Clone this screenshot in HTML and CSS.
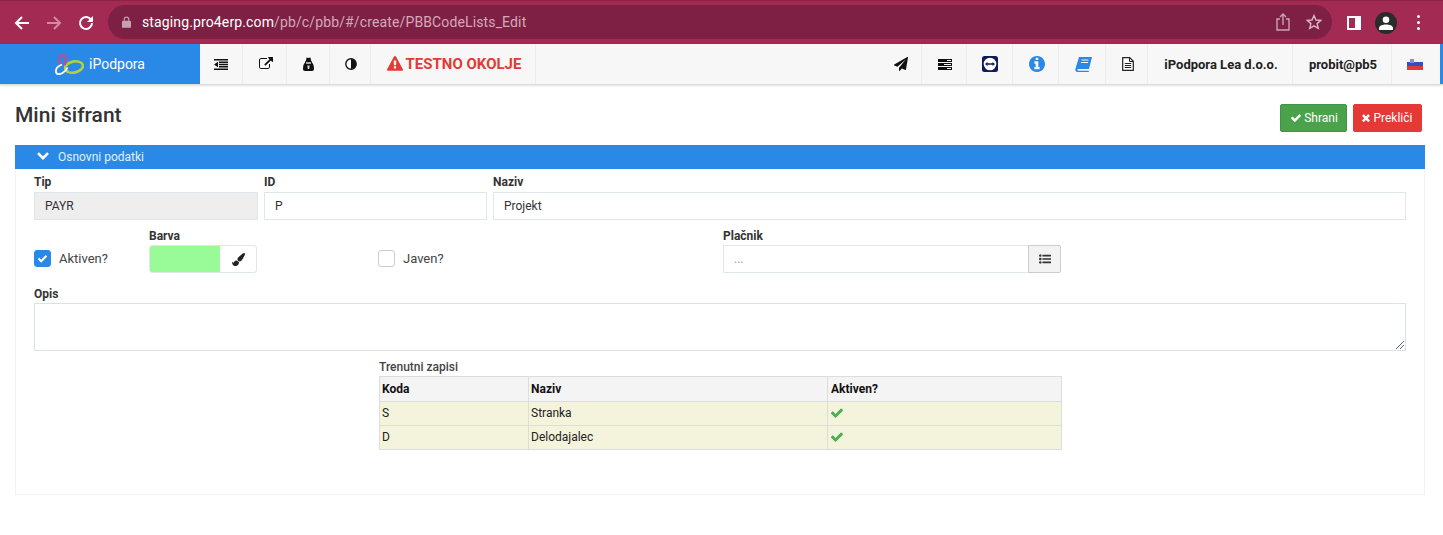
FILE: index.html
```html
<!DOCTYPE html>
<html>
  <head>
    <meta charset="utf-8">
    <title>Mini šifrant</title>
    <link rel="stylesheet" href="styles.css">
  </head>
  <body>
    <div class="browser-bar">
      <svg class="browser-icon" width="16" height="16" viewBox="0 0 16 16"><path d="M15 8H2M8 2 2 8l6 6" fill="none" stroke="#fff" stroke-width="2"/></svg>
      <svg class="browser-icon" width="16" height="16" viewBox="0 0 16 16"><path d="M1 8h13M8 2l6 6-6 6" fill="none" stroke="#d08aa4" stroke-width="2"/></svg>
      <svg class="browser-icon" width="16" height="16" viewBox="0 0 16 16"><path d="M13.200 5A6 6 0 1 0 14 8" fill="none" stroke="#fff" stroke-width="2"/><path d="M15 1v6H9z" fill="#fff"/></svg>
      <div class="address">
        <svg width="9" height="12" viewBox="0 0 10 13"><path d="M2.500 5V3.500a2.500 2.500 0 0 1 5 0V5" fill="none" stroke="#c3a3b1" stroke-width="1.300"/><rect y="5" width="10" height="8" rx="1" fill="#c3a3b1"/></svg>
        <span class="url"><b>staging.pro4erp.com</b>/pb/c/pbb/#/create/PBBCodeLists_Edit</span>
        <svg class="address-end" width="14" height="18" viewBox="0 0 14 18"><path d="M4 6H1v11h12V6h-3M7 12V1M4 4l3-3 3 3" fill="none" stroke="#c9a3b3" stroke-width="1.400"/></svg>
        <svg width="16" height="16" viewBox="0 0 16 16"><path d="m8 1.500 2 4.500 4.800.4-3.700 3.200 1.200 4.800L8 11.900l-4.300 2.500 1.200-4.800L1.200 6.400 6 6z" fill="none" stroke="#d6b6c3" stroke-width="1.400"/></svg>
      </div>
      <div class="browser-side"></div>
      <div class="avatar"><svg width="14" height="14" viewBox="0 0 14 14"><circle cx="7" cy="3.800" r="3.300" fill="#fff"/><path d="M0 14v-2c0-2.500 4-3.500 7-3.500s7 1 7 3.500v2z" fill="#fff"/></svg></div>
      <div class="browser-menu"><i></i><i></i><i></i></div>
    </div>

    <div class="navbar">
      <div class="logo">
        <svg width="29" height="21" viewBox="0 0 29 21"><ellipse cx="19" cy="13" rx="9" ry="5.500" fill="none" stroke="#b4cf3c" stroke-width="2.600" transform="rotate(-12 19 13)"/><path d="M6 11C3 6 4 1 7.500 1S12 6 10 11" fill="none" stroke="#e0407f" stroke-width="1.800"/><path d="M7 10.500C3 12 .5 15 1 18s4 2.500 6.500 1 4.500-4 5-5.500" fill="none" stroke="#fff" stroke-width="1.800"/></svg>
        <span>iPodpora</span>
      </div>
      <div class="nav-cell nav-first w43"><svg width="14" height="11" viewBox="0 0 14 11"><path d="M0 0h14v1.500H0zM0 9.500h14V11H0zM5 2.500h9v1.500H5zM5 4.800h9v1.400H5zM5 7h9v1.500H5zM4 2.800v5.400L0 5.500z" fill="#111"/></svg></div>
      <div class="nav-cell w44"><svg width="14" height="14" viewBox="0 0 1792 1792"><path d="M1408 928v320q0 119-84.500 203.500t-203.500 84.500h-832q-119 0-203.500-84.500t-84.500-203.500v-832q0-119 84.500-203.500t203.500-84.500h704q14 0 23 9t9 23v64q0 14-9 23t-23 9h-704q-66 0-113 47t-47 113v832q0 66 47 113t113 47h832q66 0 113-47t47-113v-320q0-14 9-23t23-9h64q14 0 23 9t9 23zm384-864v512q0 26-19 45t-45 19-45-19l-176-176-652 652q-10 10-23 10t-23-10l-114-114q-10-10-10-23t10-23l652-652-176-176q-19-19-19-45t19-45 45-19h512q26 0 45 19t19 45z" fill="#111"/></svg></div>
      <div class="nav-cell nav-first w43"><svg width="11" height="14" viewBox="0 0 11 14"><path d="M3 3.500 3.500.6l2 .5 2-.5L8 3.500c.7.5 1 1.200 1 2 1.300 1.300 2 3.500 2 6.500 0 1.200-.8 2-2 2H2c-1.200 0-2-.8-2-2 0-3 .7-5.200 2-6.500 0-.8.3-1.500 1-2z" fill="#111"/><path d="M3 5.200h5v1.600H3zM4.300 8.500h2.400l-.5 3.500H4.800z" fill="#d8d8d8"/></svg></div>
      <div class="nav-cell w41"><svg width="12" height="12" viewBox="0 0 12 12"><circle cx="6" cy="6" r="5.200" fill="#fff" stroke="#111" stroke-width="1.400"/><path d="M6 1a5 5 0 0 1 0 10z" fill="#111"/></svg></div>
      <div class="nav-cell warning">
        <svg width="16" height="16" viewBox="0 0 1792 1792"><path d="M1024 1375v-190q0-14-9.500-23.500t-22.500-9.500h-192q-13 0-22.500 9.500t-9.500 23.500v190q0 14 9.500 23.500t22.500 9.500h192q13 0 22.500-9.500t9.500-23.500zm-2-374l18-459q0-12-10-19-13-11-24-11h-220q-11 0-24 11-10 7-10 21l17 457q0 10 10 16.500t24 6.500h185q14 0 23.500-6.500t10.500-16.500zm-14-934l768 1408q35 63-2 126-17 29-46.500 46t-63.500 17h-1536q-34 0-63.500-17t-46.500-46q-37-63-2-126l768-1408q17-31 47-49t65-18 65 18 47 49z" fill="#e53935"/></svg>
        <span>TESTNO OKOLJE</span>
      </div>
      <div class="nav-right">
        <div class="nav-cell w43"><svg width="14" height="14" viewBox="0 0 1792 1792"><path d="M1764 11q33 24 27 64l-256 1536q-5 29-32 45-14 8-31 8-11 0-24-5l-453-185-242 295q-18 23-49 23-13 0-22-4-19-7-30.500-23.500t-11.500-36.500v-349l864-1059-1069 925-395-162q-37-14-40-55-2-40 32-59l1664-960q15-9 32-9 20 0 36 11z" fill="#111"/></svg></div>
        <div class="nav-cell w45"><svg width="14" height="11" viewBox="0 0 14 11"><path d="M0 0h14v3H0zM0 4h14v3H0zM0 8h14v3H0z" fill="#111"/><path d="M9 1h4v1H9zM6 5h7v1H6zM9 9h4v1H9z" fill="#f7f7f7"/></svg></div>
        <div class="nav-cell nav-first w46"><svg width="16" height="16" viewBox="0 0 16 16"><rect width="16" height="16" rx="2.500" fill="#0e1a5c"/><circle cx="8" cy="8" r="6.300" fill="#fff"/><path d="M3 8l2.500-2v1.200h5V6L13 8l-2.500 2V8.800h-5V10z" fill="#0e1a5c"/></svg></div>
        <div class="nav-cell w46"><svg width="16" height="16" viewBox="128 128 1536 1536"><path d="M1152 1376v-160q0-14-9-23t-23-9h-96v-512q0-14-9-23t-23-9h-320q-14 0-23 9t-9 23v160q0 14 9 23t23 9h96v320h-96q-14 0-23 9t-9 23v160q0 14 9 23t23 9h448q14 0 23-9t9-23zm-128-896v-160q0-14-9-23t-23-9h-192q-14 0-23 9t-9 23v160q0 14 9 23t23 9h192q14 0 23-9t9-23zm640 416q0 209-103 385.500t-279.500 279.500-385.500 103-385.500-103-279.500-279.500-103-385.500 103-385.500 279.500-279.500 385.500-103 385.500 103 279.500 279.500 103 385.500z" fill="#2a88e6"/></svg></div>
        <div class="nav-cell w47"><svg width="17" height="15" viewBox="0 0 17 15"><path d="M4 0h13l-3 12H3.500C2 12 2 13.800 3.500 13.800H14l-.3 1.200H2.500C.5 15 0 13 .5 11.500z" fill="#2a88e6"/><path d="M6.500 3h7M6 5.500h7" stroke="#f7f7f7"/></svg></div>
        <div class="nav-cell w42"><svg width="12" height="14" viewBox="0 0 12 14"><path d="M.7.700h7l3.600 3.600v9H.7z" fill="#fff" stroke="#222" stroke-width="1.200"/><path d="M7.500.700v3.800h3.800M2.800 6.500h6.400M2.800 8.500h6.400M2.800 10.500h6.400" fill="none" stroke="#222"/></svg></div>
        <div class="nav-cell nav-text w145">iPodpora Lea d.o.o.</div>
        <div class="nav-cell nav-text w99">probit@pb5</div>
        <div class="nav-cell flag-cell"><div class="flag"><i></i><i></i><i></i><b class="crest"></b></div></div>
      </div>
    </div>

    <div class="page-head">
      <h1>Mini šifrant</h1>
      <div class="actions">
        <button class="btn btn-save"><svg width="10" height="10" viewBox="128 128 1552 1552"><path d="M1671 566q0 40-28 68l-724 724-136 136q-28 28-68 28t-68-28l-136-136-362-362q-28-28-28-68t28-68l136-136q28-28 68-28t68 28l294 295 656-657q28-28 68-28t68 28l136 136q28 28 28 68z" fill="#fff"/></svg>Shrani</button>
        <button class="btn btn-cancel"><svg width="8" height="8" viewBox="300 300 1200 1260"><path d="M1490 1322q0 40-28 68l-136 136q-28 28-68 28t-68-28l-294-294-294 294q-28 28-68 28t-68-28l-136-136q-28-28-28-68t28-68l294-294-294-294q-28-28-28-68t28-68l136-136q28-28 68-28t68 28l294 294 294-294q28-28 68-28t68 28l136 136q28 28 28 68t-28 68l-294 294 294 294q28 28 28 68z" fill="#fff"/></svg>Prekliči</button>
      </div>
    </div>

    <div class="panel">
      <div class="panel-head">
        <svg class="chevron" width="12" height="12" viewBox="64 400 1664 1000"><path d="M1683 808l-742 741q-19 19-45 19t-45-19l-742-741q-19-19-19-45.500t19-45.500l166-165q19-19 45-19t45 19l531 531 531-531q19-19 45-19t45 19l166 165q19 19 19 45.500t-19 45.500z" fill="#fff"/></svg>
        <span>Osnovni podatki</span>
      </div>
      <div class="panel-body">
        <div class="row-top">
          <div class="field col-tip"><label>Tip</label><div class="input disabled">PAYR</div></div>
          <div class="field col-id"><label>ID</label><div class="input">P</div></div>
          <div class="field col-name"><label>Naziv</label><div class="input">Projekt</div></div>
        </div>

        <div class="row-options">
          <div class="check-line">
            <span class="check checked"><svg width="11" height="9" viewBox="0 0 11 9"><path d="M1.500 4.500l2.700 2.700 5.300-5.500" fill="none" stroke="#fff" stroke-width="2"/></svg></span>
            <span>Aktiven?</span>
          </div>
          <div class="field">
            <label>Barva</label>
            <div class="color-pick">
              <span class="swatch"></span>
              <span class="brush"><svg width="13" height="13" viewBox="0 0 1792 1792"><path d="M1615 0q70 0 122.500 46.500t52.500 116.500q0 63-45 151-332 629-465 752-97 91-218 91-126 0-216.500-92.500t-90.500-219.500q0-128 92-212l638-579q59-54 130-54zm-909 1034q39 76 106.500 130t150.500 76l1 71q4 213-129.500 347t-348.500 134q-123 0-218-46.500t-152.500-127.500-86.500-183-29-220q7 5 41 30t62 44.500 59 36.500 46 17q41 0 55-37 25-66 57.500-112.500t69.500-76 88-47.500 103-25.500 125-10.500z" fill="#222"/></svg></span>
            </div>
          </div>
          <div class="check-line">
            <span class="check"></span>
            <span>Javen?</span>
          </div>
          <div class="field">
            <label>Plačnik</label>
            <div class="lookup">
              <div class="lookup-text">...</div>
              <span class="lookup-btn"><svg width="12" height="12" viewBox="0 0 1792 1792"><path d="M384 1408q0 80-56 136t-136 56-136-56-56-136 56-136 136-56 136 56 56 136zm0-512q0 80-56 136t-136 56-136-56-56-136 56-136 136-56 136 56 56 136zm1408 416v192q0 13-9.500 22.500t-22.500 9.500h-1216q-13 0-22.500-9.500t-9.500-22.500v-192q0-13 9.500-22.500t22.500-9.500h1216q13 0 22.500 9.500t9.500 22.500zm-1408-928q0 80-56 136t-136 56-136-56-56-136 56-136 136-56 136 56 56 136zm1408 416v192q0 13-9.500 22.500t-22.500 9.500h-1216q-13 0-22.500-9.500t-9.500-22.500v-192q0-13 9.500-22.500t22.500-9.500h1216q13 0 22.500 9.500t9.500 22.500zm0-512v192q0 13-9.500 22.500t-22.500 9.500h-1216q-13 0-22.500-9.500t-9.500-22.500v-192q0-13 9.500-22.500t22.500-9.500h1216q13 0 22.500 9.500t9.500 22.500z" fill="#333"/></svg></span>
            </div>
          </div>
        </div>

        <div class="field opis">
          <label>Opis</label>
          <div class="textarea">
            <svg class="resize" width="8" height="8" viewBox="0 0 8 8"><path d="M8 0 0 8M8 4 4 8" stroke="#666"/></svg>
          </div>
        </div>

        <div class="records">
          <label>Trenutni zapisi</label>
          <table>
            <tr><th class="c1">Koda</th><th class="c2">Naziv</th><th>Aktiven?</th></tr>
            <tr><td>S</td><td>Stranka</td><td><svg class="ok" width="12" height="12" viewBox="128 128 1552 1552"><path d="M1671 566q0 40-28 68l-724 724-136 136q-28 28-68 28t-68-28l-136-136-362-362q-28-28-28-68t28-68l136-136q28-28 68-28t68 28l294 295 656-657q28-28 68-28t68 28l136 136q28 28 28 68z" fill="#4caf50"/></svg></td></tr>
            <tr><td>D</td><td>Delodajalec</td><td><svg class="ok" width="12" height="12" viewBox="128 128 1552 1552"><path d="M1671 566q0 40-28 68l-724 724-136 136q-28 28-68 28t-68-28l-136-136-362-362q-28-28-28-68t28-68l136-136q28-28 68-28t68 28l294 295 656-657q28-28 68-28t68 28l136 136q28 28 28 68z" fill="#4caf50"/></svg></td></tr>
          </table>
        </div>
      </div>
    </div>
  </body>
</html>
```

FILE: styles.css
```css
*{
  box-sizing: border-box;
}
body{
  margin: 0;
  background-color: white;
  font-family: Roboto, "Liberation Sans", sans-serif;
  font-size: 12px;
  color: #333;
  overflow: hidden;
}

/* browser chrome */
.browser-bar{
  height: 44px;
  background-color: #a32a52;
  border-top: 1px solid #8a2445;
  display: flex;
  align-items: center;
  padding-left: 14px;
}
.browser-icon{
  margin-right: 16px;
}
.address{
  width: 1224px;
  height: 34px;
  margin-left: -2px;
  margin-bottom: 1px;
  border-radius: 17px;
  background-color: #7e2044;
  display: flex;
  align-items: center;
  padding: 0 10px 0 14px;
}
.url{
  margin-left: 11px;
  font-size: 14px;
  letter-spacing: 0.13px;
  color: #d3a9ba;
}
.url b{
  font-weight: 400;
  color: white;
}
.address-end{
  margin-left: auto;
  margin-right: 16px;
}
.browser-side{
  width: 14px;
  height: 14px;
  margin-left: 15px;
  border: solid white;
  border-width: 2px 6px 2px 2px;
}
.avatar{
  width: 22px;
  height: 22px;
  margin-left: 14px;
  border-radius: 50%;
  background-color: #2b2b2b;
  overflow: hidden;
  display: flex;
  align-items: center;
  justify-content: center;
}
.browser-menu{
  margin-left: 20px;
  display: flex;
  flex-direction: column;
  gap: 3px;
}
.browser-menu i{
  width: 3px;
  height: 3px;
  border-radius: 50%;
  background-color: white;
}

/* app navbar */
.navbar{
  height: 41px;
  background-color: #f7f7f7;
  border-bottom: 1px solid #ddd;
  box-shadow: 0 1px 2px rgba(0,0,0,0.12);
  display: flex;
}
.logo{
  width: 200px;
  background-color: #2a88e6;
  color: white;
  font-size: 14px;
  display: flex;
  align-items: center;
  gap: 5px;
  padding-left: 55px;
}
.nav-cell{
  border-right: 1px solid #ececec;
  padding-left: 2px;
  display: flex;
  align-items: center;
  justify-content: center;
}
.nav-first{
  padding-left: 0;
}
.w41{ width: 41px; }
.w42{ width: 42px; }
.w43{ width: 43px; }
.w44{ width: 44px; }
.w45{ width: 45px; }
.w46{ width: 46px; }
.w47{ width: 47px; }
.w99{ width: 99px; }
.w145{ width: 145px; }
.warning{
  width: 165px;
  gap: 3px;
  color: #e53935;
  font-size: 15px;
  font-weight: 700;
}
.nav-right{
  margin-left: auto;
  display: flex;
}
.nav-text{
  color: #222;
  font-size: 13px;
  font-weight: 700;
}
.flag-cell{
  width: 51px;
  border-right: 0;
  justify-content: flex-start;
  padding-left: 15px;
  box-shadow: inset -3px 0 0 #2a88e6;
}
.flag{
  position: relative;
  width: 16px;
  height: 12px;
  display: flex;
  flex-direction: column;
}
.flag i{
  flex: 1;
}
.flag i:nth-child(1){ background-color: #f3f3f3; }
.flag i:nth-child(2){ background-color: #2f4fc4; }
.flag i:nth-child(3){ background-color: #e53935; }
.crest{
  position: absolute;
  left: 3px;
  top: 1px;
  width: 4px;
  height: 4px;
  background-color: #7f8fd8;
}

/* page */
.page-head{
  height: 60px;
  padding: 19px 21px 0 15px;
  display: flex;
  justify-content: space-between;
  align-items: flex-start;
}
h1{
  margin: 0;
  margin-top: -1px;
  font-size: 21px;
  font-weight: 500;
  line-height: 24px;
  color: #333;
}
.actions{
  display: flex;
  gap: 6px;
}
.btn{
  height: 28px;
  padding: 0;
  border-radius: 2px;
  border: 1px solid;
  color: white;
  font-family: inherit;
  font-size: 12px;
  display: flex;
  align-items: center;
  justify-content: center;
  gap: 3px;
}
.btn-save{
  width: 67px;
  padding-left: 2px;
  background-color: #4aa24a;
  border-color: #43924a;
}
.btn-cancel{
  width: 69px;
  background-color: #e53935;
  border-color: #e53935;
}
.panel{
  height: 350px;
  margin: 0 18px 0 15px;
  border: 1px solid #f2f2f2;
  border-top: 0;
}
.panel-head{
  height: 24px;
  margin: 0 -1px;
  padding: 0 0 1px 22px;
  background-color: #2a88e6;
  color: #e4f0fb;
  display: flex;
  align-items: center;
  gap: 9px;
}
.chevron{
  margin-bottom: 3px;
}
.panel-body{
  padding: 5px 18px 0 18px;
}
label{
  display: block;
  font-weight: 700;
  font-size: 12px;
  line-height: 16px;
}
.row-top{
  display: flex;
  gap: 6px;
}
.row-top label{
  margin-bottom: 2px;
}
.col-tip{ width: 224px; }
.col-id{ width: 223px; }
.col-name{ flex: 1; }
.input{
  height: 28px;
  border: 1px solid #dfe6ec;
  padding: 0 10px;
  line-height: 26px;
  color: #333;
}
.disabled{
  background-color: #eeeeee;
}
.row-options{
  display: grid;
  grid-template-columns: 115px 229px 345px 338px;
  align-items: end;
  margin-top: 8px;
  height: 45px;
}
.row-options .field label{
  line-height: 17px;
}
.check-line{
  height: 28px;
  padding-bottom: 1px;
  display: flex;
  align-items: center;
  gap: 8px;
  font-size: 13px;
  color: #444;
}
.check{
  width: 17px;
  height: 17px;
  border-radius: 3px;
  border: 1px solid #ccc;
  display: flex;
  align-items: center;
  justify-content: center;
}
.checked{
  background-color: #2a88e6;
  border-color: #2a88e6;
}
.color-pick{
  width: 108px;
  height: 28px;
  display: flex;
  border: 1px solid #dfe6ec;
  border-radius: 3px;
  overflow: hidden;
}
.swatch{
  width: 70px;
  background-color: #98fb98;
}
.brush{
  flex: 1;
  display: flex;
  align-items: center;
  justify-content: center;
}
.lookup{
  height: 28px;
  display: flex;
}
.lookup-text{
  flex: 1;
  border: 1px solid #dfe6ec;
  border-right: 0;
  padding: 0 10px;
  line-height: 26px;
  color: #999;
}
.lookup-btn{
  width: 33px;
  border: 1px solid #ccc;
  border-radius: 0 2px 2px 0;
  background-color: #f3f3f3;
  display: flex;
  align-items: center;
  justify-content: center;
}
.opis{
  margin-top: 13px;
}
.textarea{
  position: relative;
  height: 48px;
  margin-top: 1px;
  border: 1px solid #d6e3ee;
}
.resize{
  position: absolute;
  right: 1px;
  bottom: 1px;
}
.records{
  width: 683px;
  margin: 8px 0 0 345px;
}
.records label{
  font-weight: 500;
  color: #444;
  margin-bottom: 1px;
}
table{
  width: 683px;
  border-collapse: collapse;
  table-layout: fixed;
  color: #222;
}
th, td{
  height: 24px;
  padding: 0 2px 2px 2px;
  border: 1px solid #dddddd;
  text-align: left;
  background-color: #f4f3dc;
}
th:last-child, td:last-child{
  padding-left: 3px;
}
th{
  height: 25px;
  padding-bottom: 0;
  background-color: #f4f4f4;
  color: #111;
}
.c1{ width: 149px; }
.c2{ width: 299px; }
.ok{
  display: block;
}
```
